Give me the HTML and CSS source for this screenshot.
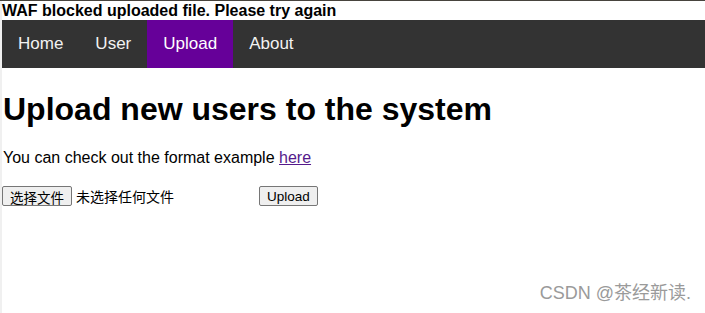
FILE: index.html
```html
<!DOCTYPE html>
<html lang="en">
<head>
    <meta charset="UTF-8">
    <meta name="viewport" content="width=device-width, initial-scale=1.0">
    <title>Upload</title>
    <link rel="stylesheet" href="styles.css">
</head>
<body>
    <div class="page">
        <div class="alert">WAF blocked uploaded file. Please try again</div>
        <div class="topnav">
            <a href="#">Home</a>
            <a href="#">User</a>
            <a href="#" class="active">Upload</a>
            <a href="#">About</a>
        </div>

        <div class="content">
            <h1>Upload new users to the system</h1>
            <p>You can check out the format example <a href="#" class="link">here</a></p>
            <form class="upload-form">
                <span class="file-pick">
                    <button type="button" class="btn">选择文件</button>
                    <span class="file-name">未选择任何文件</span>
                </span>
                <button type="button" class="btn">Upload</button>
            </form>
        </div>
    </div>
    <div class="watermark">CSDN @茶经新读.</div>
</body>
</html>
```

FILE: styles.css
```css
html, body {
    margin: 0;
    height: 100%;
}

body {
    font-family: Arial, "Liberation Sans", "Noto Sans CJK SC", sans-serif;
    background-color: white;
    color: black;
    border-top: 1px solid #48443e;
    box-sizing: border-box;
    position: relative;
}

.page {
    border-left: 2px solid #f0f0f0;
    height: 100%;
    box-sizing: border-box;
}

.alert {
    font-weight: bold;
    font-size: 16px;
    line-height: 19px;
    height: 19px;
}

.topnav {
    background-color: #333;
    display: flex;
    height: 48px;
}

.topnav a {
    color: #f2f2f2;
    text-decoration: none;
    font-size: 17px;
    padding: 0 16px;
    display: flex;
    align-items: center;
}

.topnav a.active {
    background-color: #660099;
    color: white;
}

.content {
    padding-left: 1px;
}

h1 {
    font-size: 32px;
    margin: 23px 0 21px;
}

p {
    font-size: 16px;
    margin: 16px 0;
}

.link {
    color: #551a8b;
}

.upload-form {
    display: flex;
    align-items: center;
    margin-top: 19px;
}

.file-pick {
    display: flex;
    align-items: center;
    width: 256px;
}

.file-name {
    font-size: 14px;
    margin-left: 4px;
}

.btn {
    font-family: Arial, "Liberation Sans", "Noto Sans CJK SC", sans-serif;
    font-size: 13.5px;
    height: 20px;
    padding: 0 7px;
    background-color: #efefef;
    border: 1px solid #767676;
    border-radius: 2px;
    color: black;
}

.file-pick .btn {
    margin-left: -1px;
}

.watermark {
    position: absolute;
    right: 14px;
    bottom: 9px;
    font-size: 18px;
    color: #9a9a9a;
    font-family: Arial, "Liberation Sans", "Noto Sans CJK SC", sans-serif;
}
```
